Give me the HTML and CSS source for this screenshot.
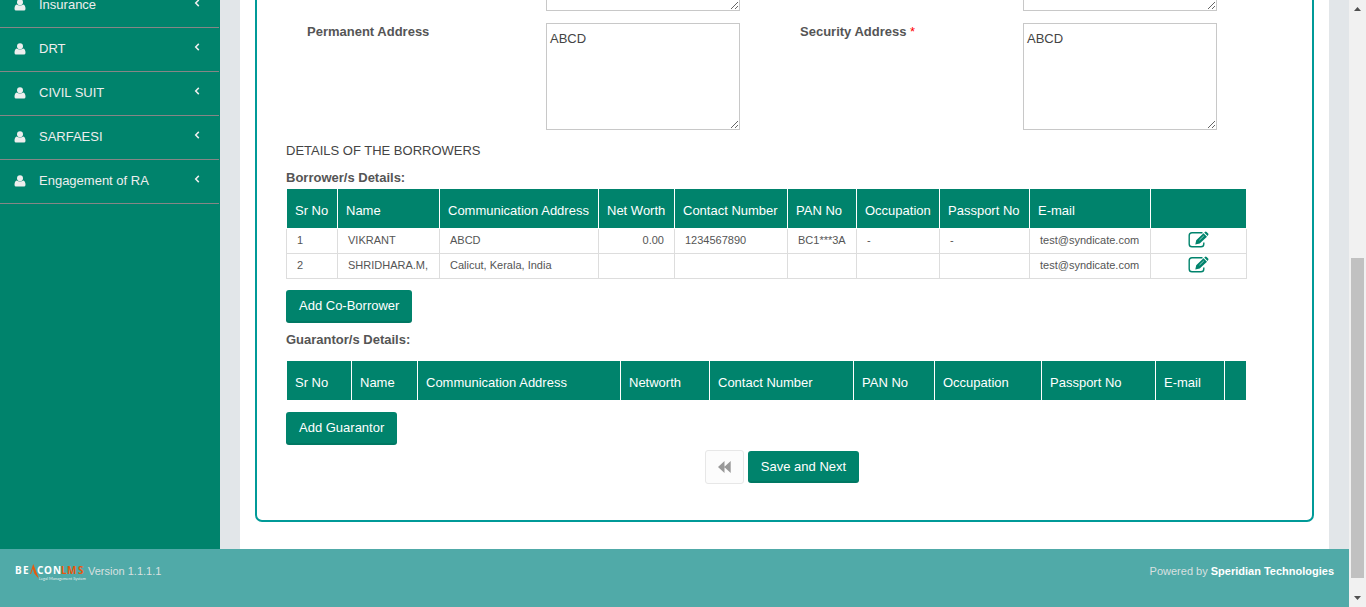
FILE: index.html
```html
<!DOCTYPE html>
<html lang="en">
<head>
<meta charset="utf-8">
<title>BeaconLMS</title>
<link rel="stylesheet" href="styles.css">
</head>
<body>
<svg class="symbols" aria-hidden="true">
  <symbol id="user" viewBox="0 0 12 12"><circle cx="6" cy="3.200" r="3"/><path d="M2.700 5.500Q4 6.600 6 6.600T9.300 5.500Q11.500 6.300 11.500 10 11.300 11.500 10 11.500H2Q.7 11.500.5 10 .5 6.300 2.700 5.500Z"/></symbol>
  <symbol id="angle" viewBox="0 0 6 8"><path d="M4.800.9 1.700 4l3.100 3.100" fill="none" stroke="currentColor" stroke-width="1.500"/></symbol>
  <symbol id="edit" viewBox="0 0 21 18"><path d="M14.500 1.700H4Q1.200 1.700 1.200 4.500V13Q1.200 15.800 4 15.800H13Q15.800 15.800 15.800 13V11.500" fill="none" stroke="currentColor" stroke-width="1.400"/><path d="M7.300 13.500 8.200 9.200 15.500 2.200 19 5.700 11.700 12.600ZM16.200 1.600 17 .9Q17.800.3 18.600 1L20.200 2.600Q20.800 3.300 20.200 4.100L19.600 4.900Z"/><path d="M11.500 9 15.800 4.900" stroke="#fff" stroke-width=".6" fill="none"/></symbol>
</svg>
<div class="page">
  <div class="main">
    <nav class="sidebar">
      <ul class="menu">
        <li><a href="#"><svg class="user"><use href="#user"/></svg><span>Insurance</span><svg class="angle"><use href="#angle"/></svg></a></li>
        <li><a href="#"><svg class="user"><use href="#user"/></svg><span>DRT</span><svg class="angle"><use href="#angle"/></svg></a></li>
        <li><a href="#"><svg class="user"><use href="#user"/></svg><span>CIVIL SUIT</span><svg class="angle"><use href="#angle"/></svg></a></li>
        <li><a href="#"><svg class="user"><use href="#user"/></svg><span>SARFAESI</span><svg class="angle"><use href="#angle"/></svg></a></li>
        <li><a href="#"><svg class="user"><use href="#user"/></svg><span>Engagement of RA</span><svg class="angle"><use href="#angle"/></svg></a></li>
      </ul>
    </nav>
    <main class="content">
      <div class="panel">
        <form class="card">
          <div class="fields">
            <span></span><textarea aria-label="Address"></textarea>
            <span></span><textarea aria-label="Other address"></textarea>
            <label for="permanent">Permanent Address</label>
            <textarea id="permanent">ABCD</textarea>
            <label for="security">Security Address <span class="required">*</span></label>
            <textarea id="security">ABCD</textarea>
          </div>
          <h2 class="section">DETAILS OF THE BORROWERS</h2>
          <h3 class="subtitle">Borrower/s Details:</h3>
          <table class="grid borrowers">
            <thead>
              <tr><th>Sr No</th><th>Name</th><th>Communication Address</th><th>Net Worth</th><th>Contact Number</th><th>PAN No</th><th>Occupation</th><th>Passport No</th><th>E-mail</th><th></th></tr>
            </thead>
            <tbody>
              <tr><td>1</td><td>VIKRANT</td><td>ABCD</td><td class="amount">0.00</td><td>1234567890</td><td>BC1***3A</td><td>-</td><td>-</td><td>test@syndicate.com</td><td class="action"><button type="button" class="edit" aria-label="Edit borrower 1"><svg><use href="#edit"/></svg></button></td></tr>
              <tr><td>2</td><td>SHRIDHARA.M,</td><td>Calicut, Kerala, India</td><td></td><td></td><td></td><td></td><td></td><td>test@syndicate.com</td><td class="action"><button type="button" class="edit" aria-label="Edit borrower 2"><svg><use href="#edit"/></svg></button></td></tr>
            </tbody>
          </table>
          <button type="button" class="btn">Add Co-Borrower</button>
          <h3 class="subtitle guarantor-title">Guarantor/s Details:</h3>
          <table class="grid guarantors">
            <thead>
              <tr><th>Sr No</th><th>Name</th><th>Communication Address</th><th>Networth</th><th>Contact Number</th><th>PAN No</th><th>Occupation</th><th>Passport No</th><th>E-mail</th><th></th></tr>
            </thead>
          </table>
          <button type="button" class="btn">Add Guarantor</button>
          <div class="steps">
            <button type="button" class="back" aria-label="Back"><svg viewBox="0 0 13 12"><path d="M6.500 0V12L0 6ZM12.700 0V12L6.200 6Z"/></svg></button>
            <button type="submit" class="btn next">Save and Next</button>
          </div>
        </form>
      </div>
    </main>
  </div>
  <footer class="footer">
    <div class="brand">
      <svg class="logo" viewBox="0 0 70 18" role="img" aria-label="BeaconLMS">
        <g class="logo-name"><text x="0" y="11">B</text><text x="8" y="11">E</text><text x="22" y="11">C</text><text x="29" y="11">O</text><text x="38" y="11">N</text><g class="logo-accent"><text x="46" y="11">L</text><text x="52" y="11">M</text><text x="63" y="11">S</text></g></g>
        <path d="M15 11 18.200 1 24 16 19.300 10.500 17.800 5.500 16 11Z" fill="#e8590c"/>
        <text class="logo-tag" x="24" y="17">Legal Management System</text>
      </svg>
      <span>Version 1.1.1.1</span>
    </div>
    <div>Powered by <strong>Speridian Technologies</strong></div>
  </footer>
</div>
<div class="scrollbar" aria-hidden="true">
  <svg viewBox="0 0 7 4"><path d="M0 4 3.500 0 7 4Z"/></svg>
  <div class="track"><div class="thumb"></div></div>
  <svg viewBox="0 0 7 4"><path d="M0 0 3.500 4 7 0Z"/></svg>
</div>
</body>
</html>
```
FILE: styles.css
```css
* { box-sizing: border-box; }
body {
  margin: 0;
  height: 100vh;
  display: flex;
  overflow: hidden;
  font: 13px/20px "Liberation Sans", Arial, sans-serif;
  color: #555;
}
button, textarea { font: inherit; }
svg { display: block; fill: currentColor; }
.symbols { display: none; }
.page { flex: 1; min-width: 0; display: flex; flex-direction: column; }
.main { flex: 1; min-height: 0; display: flex; overflow: hidden; }

.sidebar { width: 220px; flex: none; background: #00836c; }
.menu { list-style: none; margin: -16px 1px 0 0; padding: 0; }
.menu a {
  display: flex;
  align-items: center;
  padding: 11px 19px 12px 14px;
  border-bottom: 1px solid #868686;
  color: #eee;
  text-decoration: none;
}
.menu span { flex: 1; padding-left: 13px; }
.user { width: 12px; height: 12px; }
.angle { width: 6px; height: 8px; margin-bottom: 4px; }

.content { flex: 1; min-width: 0; padding: 0 20px; background: #e2e6e9; display: flex; }
.panel {
  flex: 1;
  min-width: 0;
  display: flex;
  flex-direction: column;
  justify-content: flex-end;
  padding: 0 15px 27px;
  background: #fff;
}
.card {
  flex: none;
  padding: 12px 65px 36px 29px;
  border: 2px solid #009a98;
  border-radius: 7px;
}
.fields {
  display: grid;
  grid-template-columns: 239fr 254fr 223fr 194fr;
  row-gap: 12px;
  padding: 0 30px 0 21px;
}
.fields label { font-weight: bold; line-height: 18px; }
.required { color: #f00; font-weight: normal; }
textarea {
  display: block;
  width: 194px;
  height: 107px;
  padding: 5px 3px;
  border: 1px solid #c8c8c8;
  background: #fff;
  color: #444;
}
.section { margin: 11px 0 7px; font-size: 13px; font-weight: normal; color: #444; }
.subtitle { margin: 0; font-size: 13px; }
.guarantor-title { margin: 7px 0 10px; }

.grid { width: 100%; table-layout: fixed; border-collapse: collapse; margin-bottom: 11px; }
.grid th {
  height: 40px;
  padding: 4px 8px 0;
  border: 1px solid #fff;
  background: #00836c;
  color: #fff;
  font-weight: normal;
  text-align: left;
  white-space: nowrap;
}
.grid td {
  height: 25px;
  padding: 0 10px 2px;
  border: 1px solid #ddd;
  font-size: 11px;
  white-space: nowrap;
}
.grid .amount { text-align: right; }
.grid .action { padding: 0 0 2px; }
.edit { display: block; margin: 0 auto; padding: 0; border: 0; background: none; color: #00836c; }
.edit svg { width: 21px; height: 18px; }

.borrowers th:nth-child(1) { width: 51px; }
.borrowers th:nth-child(2) { width: 102px; }
.borrowers th:nth-child(3) { width: 159px; }
.borrowers th:nth-child(4) { width: 76px; }
.borrowers th:nth-child(5) { width: 113px; }
.borrowers th:nth-child(6) { width: 69px; }
.borrowers th:nth-child(7) { width: 83px; }
.borrowers th:nth-child(8) { width: 90px; }
.borrowers th:nth-child(9) { width: 121px; }
.borrowers th:nth-child(10) { width: 96px; }
.guarantors th:nth-child(1) { width: 65px; }
.guarantors th:nth-child(2) { width: 66px; }
.guarantors th:nth-child(3) { width: 203px; }
.guarantors th:nth-child(4) { width: 89px; }
.guarantors th:nth-child(5) { width: 144px; }
.guarantors th:nth-child(6) { width: 81px; }
.guarantors th:nth-child(7) { width: 107px; }
.guarantors th:nth-child(8) { width: 114px; }
.guarantors th:nth-child(9) { width: 69px; }
.guarantors th:nth-child(10) { width: 22px; }

.btn {
  display: block;
  height: 33px;
  padding: 0 13px 2px;
  border: 0;
  border-radius: 3px;
  background: #00836c;
  box-shadow: inset 0 -2px 0 rgba(0, 0, 0, .08);
  color: #fff;
}
.steps { display: flex; justify-content: center; align-items: center; gap: 4px; margin: 5px 0 0 31px; }
.next { height: 32px; padding: 0 13px 1px; }
.back {
  width: 39px;
  height: 34px;
  padding: 0 12px;
  border: 1px solid #e7e7e7;
  border-radius: 3px;
  background: #fcfcfc;
  color: #999;
}
.back svg { width: 13px; height: 12px; }

.footer {
  display: flex;
  justify-content: space-between;
  padding: 12px 15px 26px;
  background: #50aaa8;
  color: #d9e0e0;
  font-size: 11px;
}
.footer strong { color: #fff; }
.brand { display: flex; gap: 3px; }
.logo { width: 70px; height: 18px; margin-top: 2px; overflow: visible; }
.logo-name { font: bold 10px "Noto Sans", "Open Sans", sans-serif; fill: #fff; }
.logo-accent { fill: #e8590c; }
.logo-tag { font: 4px Lato, sans-serif; fill: #e4efef; }

.scrollbar {
  width: 17px;
  flex: none;
  display: flex;
  flex-direction: column;
  align-items: center;
  padding: 7px 2px;
  background: #f1f1f1;
  color: #505050;
}
.scrollbar svg { width: 7px; height: 4px; flex: none; }
.track { flex: 1; width: 13px; margin: 6px 0 18px; display: flex; flex-direction: column; justify-content: flex-end; }
.thumb { height: 57%; background: #c1c1c1; }
```
